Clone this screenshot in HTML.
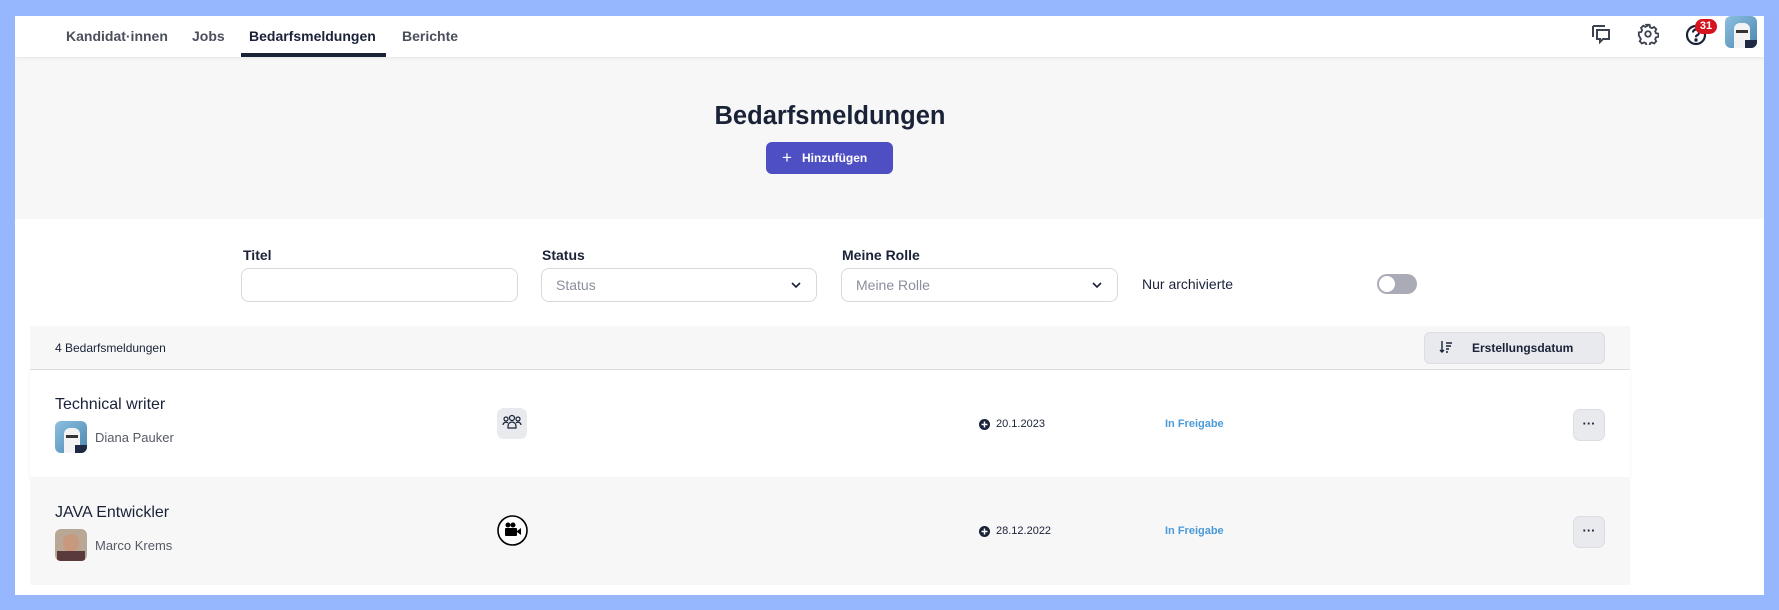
<!DOCTYPE html>
<html><head><meta charset="utf-8"><style>
*{box-sizing:border-box;margin:0;padding:0}
body{width:1779px;height:610px;background:#96b7fd;font-family:"Liberation Sans",sans-serif;position:relative;overflow:hidden;color:#1a2238}
.a{position:absolute}
#page{left:15px;top:16px;width:1749px;height:579px;background:#fff;overflow:hidden}
.nav{font-size:14px;font-weight:bold;color:#4a4f5c;top:12px}
.lbl{font-size:14px;font-weight:bold;color:#1a2238}
.inp{border:1px solid #d8d9de;border-radius:8px;height:34px;background:#fff}
.ph{font-size:14px;color:#8a8f9c;left:14px;top:8px}
.chev{right:14px;top:10px}
.row{left:15px;width:1600px;height:107px}
.t1{font-size:16px;color:#1a2238;left:25px;top:26px}
.nm{font-size:13px;color:#555b66;left:65px;top:60px}
.av{left:25px;top:51px;width:32px;height:32px;border-radius:6px;overflow:hidden}
.dt{font-size:11px;color:#1a2238;left:966px}
.fr{font-size:11px;font-weight:bold;color:#4a9ad8;left:1135px}
.dots{left:1543px;width:32px;height:32px;border-radius:7px;background:#e9eaee;border:1px solid #dcdde2;font-size:13px;font-weight:bold;text-align:center;line-height:28px;color:#1a2238}
</style></head><body>
<div id="page" class="a">
  <div class="a" style="left:0;top:0;width:1749px;height:41px;background:#fff;box-shadow:0 1px 3px rgba(0,0,0,.08);z-index:2">
    <div class="a nav" style="left:51px">Kandidat·innen</div>
    <div class="a nav" style="left:177px">Jobs</div>
    <div class="a nav" style="left:234px;color:#1a2238">Bedarfsmeldungen</div>
    <div class="a" style="left:226px;top:37px;width:145px;height:4px;background:#1a2238"></div>
    <div class="a nav" style="left:387px">Berichte</div>
    <svg class="a" style="left:1576px;top:8px" width="20" height="20" viewBox="0 0 20 20" fill="none" stroke="#3d4250" stroke-width="2"><path d="M2 2h12M2 2v11"/><path d="M6 6h12v9h-6l-3 3v-3H6z"/></svg>
    <svg class="a" style="left:1622px;top:7px" width="22" height="22" viewBox="0 0 24 24" fill="none" stroke="#3d4250" stroke-width="2"><circle cx="12" cy="12" r="3"/><path d="M10.3 2h3.4l.5 2.6 2 1 2.4-1.2 2.4 2.4-1.2 2.4 1 2 2.6.5v3.4l-2.6.5-1 2 1.2 2.4-2.4 2.4-2.4-1.2-2 1-.5 2.6h-3.4l-.5-2.6-2-1-2.4 1.2-2.4-2.4 1.2-2.4-1-2L2 13.7v-3.4l2.6-.5 1-2-1.2-2.4 2.4-2.4 2.4 1.2 2-1z"/></svg>
    <svg class="a" style="left:1670px;top:8px" width="22" height="22" viewBox="0 0 22 22" fill="none" stroke="#1a2238" stroke-width="2.2"><circle cx="11" cy="11" r="9"/><path d="M8 8.5a3 3 0 1 1 4 2.8c-1 .4-1 1-1 2"/><circle cx="11" cy="16" r=".6" fill="#1a2238"/></svg>
    <div class="a" style="left:1680px;top:3px;width:22px;height:15px;border-radius:8px;background:#d5141f;color:#fff;font-size:11px;font-weight:bold;text-align:center;line-height:15px">31</div>
    <div class="a" style="left:1710px;top:0;width:32px;height:32px;border-radius:6px;background:linear-gradient(135deg,#8dc0e0,#4a86b0);overflow:hidden"><div class="a" style="left:9px;top:7px;width:16px;height:25px;background:#f3f3f3;border-radius:6px 6px 0 0"></div><div class="a" style="left:11px;top:14px;width:12px;height:3px;background:#333"></div><div class="a" style="left:20px;top:24px;width:12px;height:8px;background:#1e2a44"></div></div>
  </div>
  <div class="a" style="left:0;top:41px;width:1749px;height:162px;background:#f7f7f7"></div>
  <div class="a" style="left:0;top:86px;width:1630px;text-align:center;font-size:25.5px;font-weight:bold;color:#1a2238">Bedarfsmeldungen</div>
  <div class="a" style="left:751px;top:126px;width:127px;height:32px;border-radius:6px;background:#4f4fc4;color:#fff;font-size:12px;font-weight:bold;line-height:32px;padding-left:16px"><span style="font-size:17px;font-weight:normal;vertical-align:-1px">+</span>&nbsp;&nbsp;&nbsp;Hinzufügen</div>

  <div class="a lbl" style="left:228px;top:231px">Titel</div>
  <div class="a inp" style="left:226px;top:252px;width:277px"></div>
  <div class="a lbl" style="left:527px;top:231px">Status</div>
  <div class="a inp" style="left:526px;top:252px;width:276px"><div class="a ph">Status</div><svg class="a chev" width="12" height="12" viewBox="0 0 12 12" fill="none" stroke="#1a2238" stroke-width="1.6"><path d="M2 4l4 4 4-4"/></svg></div>
  <div class="a lbl" style="left:827px;top:231px">Meine Rolle</div>
  <div class="a inp" style="left:826px;top:252px;width:277px"><div class="a ph">Meine Rolle</div><svg class="a chev" width="12" height="12" viewBox="0 0 12 12" fill="none" stroke="#1a2238" stroke-width="1.6"><path d="M2 4l4 4 4-4"/></svg></div>
  <div class="a" style="left:1127px;top:260px;font-size:14px;color:#1a2238">Nur archivierte</div>
  <div class="a" style="left:1362px;top:258px;width:40px;height:20px;border-radius:10px;background:#a9abb6"><div class="a" style="left:2px;top:2px;width:16px;height:16px;border-radius:50%;background:#fff"></div></div>

  <div class="a" style="left:15px;top:310px;width:1600px;height:44px;background:#f7f7f7;border-bottom:1px solid #dcdde2"></div>
  <div class="a" style="left:40px;top:325px;font-size:12px;color:#1a2238">4 Bedarfsmeldungen</div>
  <div class="a" style="left:1409px;top:316px;width:181px;height:32px;border-radius:6px;background:#e9eaee;border:1px solid #dcdde2;font-size:12px;font-weight:bold;line-height:30px;padding-left:47px">Erstellungsdatum</div>
  <svg class="a" style="left:1424px;top:324px" width="14" height="14" viewBox="0 0 14 14" fill="none" stroke="#1a2238" stroke-width="1.4"><path d="M3 1v11M1 10l2 2 2-2M7 3h6M7 6h5M7 9h3M7 12h2"/></svg>

  <div class="a row" style="top:354px;background:#fff;box-shadow:0 2px 4px rgba(0,0,0,.05)">
    <div class="a t1">Technical writer</div>
    <div class="a av" style="background:linear-gradient(135deg,#8dc0e0,#4a86b0)"><div class="a" style="left:9px;top:7px;width:16px;height:25px;background:#f3f3f3;border-radius:6px 6px 0 0"></div><div class="a" style="left:11px;top:14px;width:12px;height:3px;background:#333"></div><div class="a" style="left:20px;top:24px;width:12px;height:8px;background:#1e2a44"></div></div>
    <div class="a nm">Diana Pauker</div>
    <div class="a" style="left:467px;top:38px;width:30px;height:31px;border-radius:7px;background:#e9eaee"><svg class="a" style="left:5px;top:6px" width="20" height="18" viewBox="0 0 20 18" fill="none" stroke="#1a2238" stroke-width="1.2"><circle cx="4" cy="5" r="2"/><circle cx="10" cy="4" r="2.5"/><circle cx="16" cy="5" r="2"/><path d="M1 11a3 3 0 0 1 5-2M19 11a3 3 0 0 0-5-2M6 14v-2a4 4 0 0 1 8 0v2z"/></svg></div>
    <svg class="a" style="left:949px;top:49px" width="11" height="11" viewBox="0 0 11 11"><circle cx="5.5" cy="5.5" r="5.5" fill="#1a2238"/><path d="M5.5 2.5v6M2.5 5.5h6" stroke="#fff" stroke-width="1.5"/></svg>
    <div class="a dt" style="top:48px">20.1.2023</div>
    <div class="a fr" style="top:48px">In Freigabe</div>
    <div class="a dots" style="top:39px">···</div>
  </div>
  <div class="a row" style="top:462px;background:#f7f7f7">
    <div class="a t1">JAVA Entwickler</div>
    <div class="a av" style="background:#b9a796"><div class="a" style="left:8px;top:5px;width:16px;height:18px;border-radius:8px;background:#c9997f"></div><div class="a" style="left:2px;top:22px;width:28px;height:10px;background:#5a3a3a"></div></div>
    <div class="a nm">Marco Krems</div>
    <svg class="a" style="left:467px;top:37px" width="31" height="31" viewBox="0 0 31 31"><circle cx="15.5" cy="15.5" r="14.5" fill="#fff" stroke="#000" stroke-width="1.6"/><circle cx="11" cy="10" r="2.5"/><circle cx="16" cy="10" r="2.5"/><rect x="8" y="13" width="12" height="8" rx="1"/><path d="M20 16l4-3v7l-4-3z"/></svg>
    <svg class="a" style="left:949px;top:48px" width="11" height="11" viewBox="0 0 11 11"><circle cx="5.5" cy="5.5" r="5.5" fill="#1a2238"/><path d="M5.5 2.5v6M2.5 5.5h6" stroke="#fff" stroke-width="1.5"/></svg>
    <div class="a dt" style="top:47px">28.12.2022</div>
    <div class="a fr" style="top:47px">In Freigabe</div>
    <div class="a dots" style="top:38px">···</div>
  </div>
  <div class="a row" style="top:569px;height:20px;background:#fff"></div>
</div>
</body></html>
